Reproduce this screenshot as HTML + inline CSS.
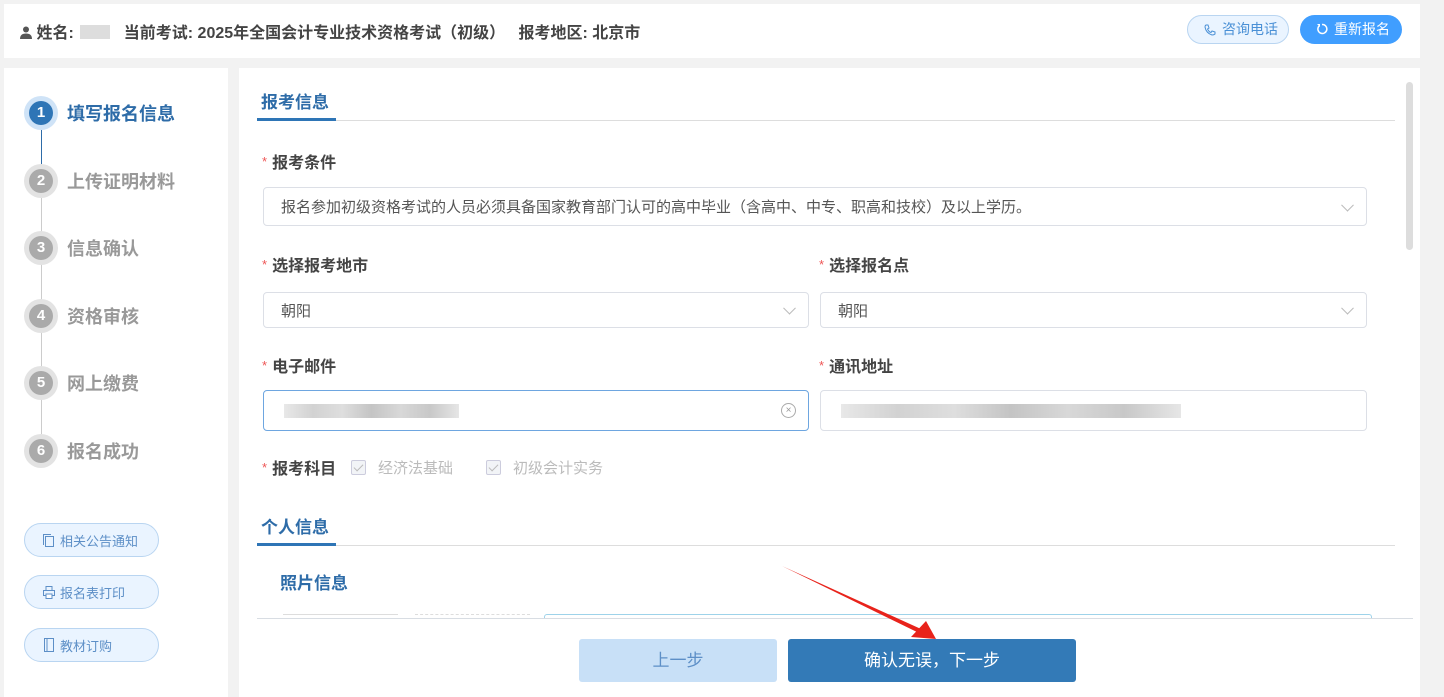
<!DOCTYPE html>
<html><head><meta charset="utf-8"><style>
*{margin:0;padding:0;box-sizing:border-box}
body{width:1444px;height:697px;background:#f2f2f2;font-family:"Liberation Sans","Noto Sans CJK SC",sans-serif;position:relative;overflow:hidden;color:#333}
.a{position:absolute}
.hdr{left:4px;top:4px;width:1416px;height:54px;background:#fff}
.side{left:4px;top:68px;width:224px;height:629px;background:#fff}
.main{left:239px;top:68px;width:1181px;height:629px;background:#fff}
.sec{font-size:17px;font-weight:bold;color:#2e6ca8}
.lbl{font-size:16px;font-weight:bold;color:#444}
.lbl b{color:#e55;font-weight:normal;font-size:13px;margin-right:5px;vertical-align:2px}
.inp{border:1px solid #dcdfe6;border-radius:4px;background:#fff;font-size:15px;color:#555;padding-left:17px;display:flex;align-items:center}
.chev{position:absolute;right:14px;top:50%;width:9px;height:9px;border-right:1px solid #bbb;border-bottom:1px solid #bbb;transform:translateY(-70%) rotate(45deg)}
.step{left:24px;width:34px;height:34px;border-radius:50%;background:#e3e3e3}
.step i{position:absolute;left:5px;top:5px;width:24px;height:24px;border-radius:50%;background:#aaa;color:#fff;font-style:normal;font-weight:bold;font-size:15px;text-align:center;line-height:24px}
.stxt{left:67px;font-size:18px;font-weight:bold;color:#999}
.sbtn{left:24px;width:135px;height:34px;border:1px solid #b9d5f1;border-radius:17px;background:#eaf4ff;color:#5d8fc7;font-size:13px;display:flex;align-items:center;padding-left:18px;gap:5px}
.blur{background:linear-gradient(90deg,#e8e8e8,#d2d2d2,#dedede,#c4c4c4,#d8d8d8,#c8c8c8,#e6e6e6);height:14px}
.cb{display:inline-block;width:15px;height:15px;border:1px solid #ccd;border-radius:2px;background:#f2f4f7;vertical-align:-2px;position:relative}
.cb::after{content:"";position:absolute;left:4px;top:1px;width:4px;height:8px;border-right:1px solid #bbb;border-bottom:1px solid #bbb;transform:rotate(45deg)}
</style></head><body>
<div class="a hdr"></div>
<div class="a" style="left:20px;top:19px;font-size:16px;font-weight:bold;color:#444;white-space:nowrap">
<svg width="12" height="13" viewBox="0 0 12 13" style="vertical-align:-1px"><circle cx="6" cy="3.5" r="3" fill="#555"/><path d="M0 13 Q0 7.5 6 7.5 Q12 7.5 12 13Z" fill="#555"/></svg> 姓名:<span style="display:inline-block;width:30px;height:14px;background:#ddd;margin:0 14px 0 6px;vertical-align:-1px"></span>当前考试: 2025年全国会计专业技术资格考试（初级） &nbsp; 报考地区: 北京市</div>
<div class="a" style="left:1187px;top:15px;width:102px;height:29px;border:1px solid #b9d5f1;border-radius:15px;background:#eaf4ff;color:#4a90d6;font-size:14px;line-height:26px;padding-left:34px">咨询电话
<svg class="a" style="left:16px;top:8px" width="12" height="12" viewBox="0 0 12 12"><path d="M2 1 L4 1 L5 4 L3.5 5 Q5 8 7 8.5 L8 7 L11 8 L11 10 Q10 11 8 11 Q2 9 1 3 Q1 1.5 2 1Z" fill="none" stroke="#4a90d6"/></svg></div>
<div class="a" style="left:1300px;top:15px;width:102px;height:29px;border-radius:15px;background:#409eff;color:#fff;font-size:14px;line-height:28px;padding-left:34px">重新报名
<svg class="a" style="left:16px;top:8px" width="12" height="12" viewBox="0 0 12 12"><path d="M3 3 A4.5 4.5 0 1 0 6 1.5" fill="none" stroke="#fff" stroke-width="1.5"/><path d="M1 1 L4 1 L4 4Z" fill="#fff"/></svg></div>

<div class="a side"></div>
<div class="a" style="left:41px;top:130px;width:1px;height:34px;background:#2e6ca8"></div>
<div class="a" style="left:41px;top:198px;width:1px;height:236px;background:#ccc"></div>
<div class="a step" style="top:96px;background:#cfe3f7"><i style="background:#2e75b6">1</i></div>
<div class="a stxt" style="top:100px;color:#2e6ca8">填写报名信息</div>
<div class="a step" style="top:164px"><i>2</i></div><div class="a stxt" style="top:168px">上传证明材料</div>
<div class="a step" style="top:231px"><i>3</i></div><div class="a stxt" style="top:235px">信息确认</div>
<div class="a step" style="top:299px"><i>4</i></div><div class="a stxt" style="top:303px">资格审核</div>
<div class="a step" style="top:366px"><i>5</i></div><div class="a stxt" style="top:370px">网上缴费</div>
<div class="a step" style="top:434px"><i>6</i></div><div class="a stxt" style="top:438px">报名成功</div>
<div class="a sbtn" style="top:523px"><svg width="12" height="13"><rect x="2.5" y="2.5" width="8" height="10" fill="none" stroke="#5d8fc7"/><path d="M0.5 11 V0.5 H8" fill="none" stroke="#5d8fc7"/></svg>相关公告通知</div>
<div class="a sbtn" style="top:575px"><svg width="12" height="13"><rect x="3" y="0.5" width="6" height="4" fill="none" stroke="#5d8fc7"/><rect x="0.5" y="4.5" width="11" height="5" fill="none" stroke="#5d8fc7"/><rect x="3" y="8" width="6" height="4.5" fill="#fff" stroke="#5d8fc7"/></svg>报名表打印</div>
<div class="a sbtn" style="top:628px"><svg width="12" height="14"><rect x="1.5" y="0.5" width="9" height="13" fill="none" stroke="#5d8fc7"/><line x1="4" y1="1" x2="4" y2="13" stroke="#5d8fc7"/></svg>教材订购</div>

<div class="a main"></div>
<div class="a" style="left:1406px;top:82px;width:7px;height:168px;border-radius:4px;background:#ddd"></div>
<div class="a sec" style="left:261px;top:88px">报考信息</div>
<div class="a" style="left:257px;top:120px;width:1138px;height:1px;background:#ddd"></div>
<div class="a" style="left:257px;top:118px;width:79px;height:3px;background:#2e75b6"></div>
<div class="a lbl" style="left:262px;top:149px"><b>*</b>报考条件</div>
<div class="a inp" style="left:263px;top:187px;width:1104px;height:39px">报名参加初级资格考试的人员必须具备国家教育部门认可的高中毕业（含高中、中专、职高和技校）及以上学历。<span class="chev"></span></div>
<div class="a lbl" style="left:262px;top:252px"><b>*</b>选择报考地市</div>
<div class="a lbl" style="left:819px;top:252px"><b>*</b>选择报名点</div>
<div class="a inp" style="left:263px;top:292px;width:546px;height:36px">朝阳<span class="chev"></span></div>
<div class="a inp" style="left:820px;top:292px;width:547px;height:36px">朝阳<span class="chev"></span></div>
<div class="a lbl" style="left:262px;top:353px"><b>*</b>电子邮件</div>
<div class="a lbl" style="left:819px;top:353px"><b>*</b>通讯地址</div>
<div class="a inp" style="left:263px;top:390px;width:546px;height:41px;border-color:#6ea6e0"><div class="blur" style="width:175px;margin-left:3px"></div><span class="a" style="right:12px;top:12px;width:15px;height:15px;border:1px solid #aaa;border-radius:50%;font-size:10px;line-height:13px;text-align:center;color:#999">×</span></div>
<div class="a inp" style="left:820px;top:390px;width:547px;height:41px"><div class="blur" style="width:340px;margin-left:3px"></div></div>
<div class="a lbl" style="left:262px;top:455px"><b>*</b>报考科目</div>
<div class="a" style="left:351px;top:457px;font-size:15px;color:#bbb"><span class="cb" style="margin-right:12px"></span>经济法基础<span class="cb" style="margin:0 12px 0 33px"></span>初级会计实务</div>
<div class="a sec" style="left:261px;top:513px;color:#2e6ca8">个人信息</div>
<div class="a" style="left:257px;top:545px;width:1138px;height:1px;background:#ddd"></div>
<div class="a" style="left:257px;top:543px;width:79px;height:3px;background:#2e75b6"></div>
<div class="a sec" style="left:280px;top:569px">照片信息</div>
<div class="a" style="left:283px;top:614px;width:115px;height:1px;background:#ddd"></div>
<div class="a" style="left:415px;top:614px;width:115px;height:1px;border-top:1px dashed #ddd"></div>
<div class="a" style="left:544px;top:614px;width:828px;height:5px;border:1px solid #9ed3ea;border-bottom:none;border-radius:3px 3px 0 0"></div>
<div class="a" style="left:257px;top:618px;width:1156px;height:1px;background:#d8dde3"></div>
<div class="a" style="left:257px;top:619px;width:1156px;height:78px;background:#fff"></div>
<div class="a" style="left:579px;top:639px;width:198px;height:43px;border-radius:3px;background:#c8e0f7;color:#5d8fc7;font-size:17px;text-align:center;line-height:43px">上一步</div>
<div class="a" style="left:788px;top:639px;width:288px;height:43px;border-radius:3px;background:#337ab7;color:#fff;font-size:17px;text-align:center;line-height:43px">确认无误，下一步</div>
<svg class="a" style="left:780px;top:562px" width="170" height="85"><path d="M2 4 L141 67 L139 71 Z" fill="#e8231b"/><path d="M156 77 L131 75 L146 59Z" fill="#e8231b"/></svg>
</body></html>
